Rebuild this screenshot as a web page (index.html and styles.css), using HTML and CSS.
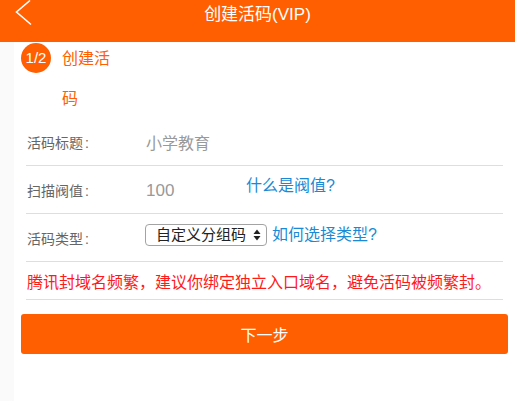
FILE: index.html
```html
<!DOCTYPE html>
<html lang="zh-CN">
<head>
  <meta charset="UTF-8">
  <meta name="viewport" content="width=device-width, initial-scale=1">
  <title>创建活码(VIP)</title>
  <link rel="stylesheet" href="styles.css">
</head>
<body>
  <!-- Top bar -->
  <div class="topbar">
    <a class="back" href="#">
      <svg width="20" height="26" viewBox="0 0 20 26">
        <polyline points="15,0.5 1.5,12 16,24.5" fill="none" stroke="#fff" stroke-width="1.6"/>
      </svg>
    </a>
    <div class="topbar-title">创建活码(VIP)</div>
  </div>

  <div class="page">
    <!-- Step -->
    <div class="step">
      <div class="step-num">1/2</div>
      <div class="step-name">创建活码</div>
    </div>

    <!-- Form -->
    <div class="form">
      <div class="form-row">
        <div class="form-label">活码标题<span class="colon">:</span></div>
        <div class="form-value">小学教育</div>
      </div>
      <div class="form-row">
        <div class="form-label">扫描阀值<span class="colon">:</span></div>
        <div class="form-value value-short">100</div>
        <a class="help-link help-raised" href="#">什么是阀值?</a>
      </div>
      <div class="form-row">
        <div class="form-label">活码类型<span class="colon">:</span></div>
        <div class="select-box">
          <span class="select-text">自定义分组码</span>
          <svg class="select-arrows" width="8" height="12" viewBox="0 0 8 12">
            <polygon points="4,0.5 7.5,5 0.5,5" fill="#222"/>
            <polygon points="0.5,7 7.5,7 4,11.5" fill="#222"/>
          </svg>
        </div>
        <a class="help-link help-type" href="#">如何选择类型?</a>
      </div>
      <div class="form-row row-warn">
        <div class="warn-text">腾讯封域名频繁，建议你绑定独立入口域名，避免活码被频繁封。</div>
      </div>
    </div>

    <button class="next-btn">下一步</button>
  </div>
</body>
</html>
```

FILE: styles.css
```css
body {
  margin: 0;
  padding: 0;
  background-color: #fafafa;
  font-family: "Liberation Sans", "Noto Sans CJK SC", sans-serif;
  color: #333;
}
a {
  text-decoration: none;
}
/* Top bar */
.topbar {
  position: relative;
  height: 42px;
  background-color: #ff5f00;
  display: flex;
  justify-content: center;
}
.topbar-title {
  color: #fff;
  font-size: 17px;
  line-height: 30px;
}
.back {
  position: absolute;
  left: 15px;
  top: 0;
  display: block;
  height: 26px;
}
/* Page */
.page {
  margin-left: 14px;
  background-color: #fff;
  min-height: 359px;
  overflow: hidden;
}
.step {
  display: flex;
  padding: 1px 0 0 7px;
}
.step-num {
  width: 30px;
  height: 30px;
  border-radius: 50%;
  background-color: #ff5f00;
  color: #fff;
  font-size: 15px;
  line-height: 30px;
  text-align: center;
  flex-shrink: 0;
}
.step-name {
  width: 50px;
  margin-left: 11px;
  margin-top: -4px;
  color: #ff5f00;
  font-size: 16px;
  line-height: 40px;
}
/* Form */
.form {
  margin: -1px 12px 0 12px;
}
.form-row {
  display: flex;
  align-items: center;
  height: 47px;
  border-bottom: 1px solid #dedede;
}
.form-label {
  width: 119px;
  padding-left: 1px;
  font-size: 14px;
  color: #666;
  flex-shrink: 0;
}
.colon {
  margin-left: 2px;
}
.form-value {
  font-size: 16px;
  color: #999;
}
.value-short {
  width: 100px;
  margin-top: 2px;
  font-size: 17px;
}
.help-link {
  color: #1a8ad4;
  font-size: 16px;
}
.help-raised {
  margin-bottom: 11px;
}
.select-box {
  position: relative;
  width: 120px;
  height: 20px;
  border: 1px solid #a3a3a3;
  border-radius: 4px;
  background-color: #fff;
  margin-left: -1px;
  margin-bottom: 6px;
  display: flex;
  align-items: center;
}
.select-text {
  padding-left: 10px;
  font-size: 15px;
  color: #222;
  line-height: 20px;
}
.select-arrows {
  position: absolute;
  right: 5px;
  top: 4px;
}
.help-type {
  margin-left: 5px;
  margin-bottom: 10px;
}
.row-warn {
  height: 37px;
}
.warn-text {
  padding-left: 1px;
  color: #ff1a1a;
  font-size: 16px;
  white-space: nowrap;
}
/* Button */
.next-btn {
  display: block;
  width: 487px;
  height: 40px;
  margin: 14px 0 0 7px;
  border: none;
  border-radius: 3px;
  background-color: #ff5f00;
  color: #fff;
  font-family: inherit;
  font-size: 16px;
  cursor: pointer;
}
```
